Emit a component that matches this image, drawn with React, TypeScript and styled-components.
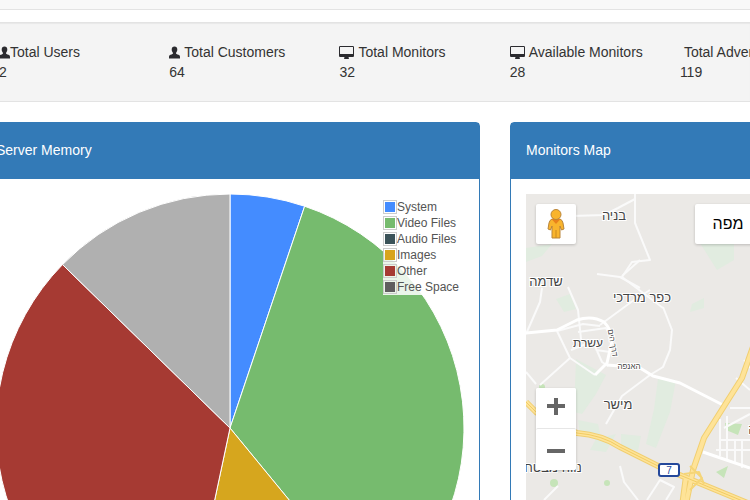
import React from "react";
import styled, { createGlobalStyle } from "styled-components";

const GlobalStyle = createGlobalStyle`
  * { box-sizing: border-box; }
  body {
    margin: 0;
    background: #fff;
    color: #333;
    font: 14px/20px "Liberation Sans", Arial, sans-serif;
  }
`;

const Page = styled.div`
  height: 100vh;
  overflow: hidden;
`;

const TopBar = styled.header`
  height: 10px;
  margin-bottom: 12px;
  background: #f8f8f8;
  border-bottom: 1px solid #e3e3e3;
`;

const StatsWell = styled.section`
  display: grid;
  grid-template-columns: repeat(6, calc(68% / 3));
  margin: 0 0 20px -1px;
  padding: 19px 0;
  background: #f4f4f4;
  border: solid #e3e3e3;
  border-width: 1px 0;
  box-shadow: inset 0 1px 1px rgba(0, 0, 0, 0.05);
`;

const Stat = styled.div`
  white-space: nowrap;
`;

const StatLabel = styled.div<{ $gap: number }>`
  display: flex;
  align-items: center;
  gap: ${(p) => p.$gap}px;
`;

const Icon = styled.svg<{ $width: number }>`
  width: ${(p) => p.$width}px;
  height: 13px;
  fill: #2b2b2f;
`;

const IconSpace = styled.span`
  width: 0;
`;

const Panels = styled.main`
  display: grid;
  grid-template-columns: repeat(2, calc(200% / 3));
  gap: 30px;
  margin: 0 20px 0 -20px;
`;

const Panel = styled.section`
  border: 1px solid #337ab7;
  border-radius: 4px;
`;

const PanelTitle = styled.h2`
  margin: 0;
  padding: 17px 15px 19px;
  background: #337ab7;
  color: #fff;
  font-size: 14px;
  font-weight: 400;
  line-height: 20px;
`;

const PanelBody = styled.div`
  position: relative;
  padding: 15px;
`;

const Drawing = styled.svg`
  display: block;
  width: 100%;
`;

const Legend = styled.ul`
  position: absolute;
  top: 20px;
  right: 20px;
  margin: 0;
  padding: 0;
  list-style: none;
  background: rgba(255, 255, 255, 0.85);
  color: #545454;
  font-size: 12px;
  line-height: 16px;
`;

const LegendItem = styled.li`
  display: flex;
  align-items: center;
`;

const Swatch = styled.span<{ $color: string }>`
  width: 14px;
  height: 14px;
  padding: 1px;
  border: 1px solid #ccc;
  background: ${(p) => p.$color} content-box;
`;

const MapFrame = styled.div`
  position: relative;
  overflow: hidden;
  background: #ebe9e6;
`;

const MapButton = styled.button`
  display: flex;
  align-items: center;
  justify-content: center;
  width: 40px;
  height: 40px;
  padding: 0;
  border: 0;
  border-radius: 2px;
  background: #fff;
  color: #000;
`;

const FloatingButton = styled(MapButton)`
  position: absolute;
  top: 10px;
  left: 10px;
  box-shadow: 0 1px 3px rgba(0, 0, 0, 0.2);
`;

const MapTypeButton = styled(FloatingButton)`
  left: 169px;
  width: 66px;
  font: 16px "Liberation Sans", Arial, sans-serif;
`;

const ZoomControl = styled.div`
  position: absolute;
  top: 194px;
  left: 10px;
  border-radius: 2px;
  background: #fff;
  box-shadow: 0 1px 3px rgba(0, 0, 0, 0.2);

  button + button {
    border-top: 1px solid #e6e6e6;
    height: 42px;
  }
`;

const MapLabel = styled.text<{ $size?: number }>`
  fill: #444;
  stroke: #fff;
  stroke-width: 2px;
  paint-order: stroke;
  text-anchor: middle;
  font: ${(p) => p.$size ?? 13}px "Liberation Sans", Arial, sans-serif;
`;

const ShieldText = styled.text`
  fill: #24489b;
  text-anchor: middle;
  font: 10px "Liberation Sans", Arial, sans-serif;
`;

type IconName = "user" | "desktop";

const icons: Record<IconName, { box: string; width: number; d: string }> = {
  user: {
    box: "0 0 11 13",
    width: 11,
    d: "M5.500 0.500C7.300 0.500 8.300 1.800 8.300 3.600 8.300 4.900 7.800 6 7.100 6.700V7.700C7.300 8.200 9.500 8.600 10.400 9.300 10.900 9.700 11 10.300 11 11.200V12.500H0V11.200C0 10.300 0.100 9.700 0.600 9.300 1.500 8.600 3.700 8.200 3.900 7.700V6.700C3.200 6 2.700 4.900 2.700 3.600 2.700 1.800 3.700 0.500 5.500 0.500Z",
  },
  desktop: {
    box: "0 0 1920 1664",
    width: 15,
    d: "M1792 992v-832q0-13-9.5-22.5t-22.5-9.5h-1600q-13 0-22.5 9.5t-9.5 22.5v832q0 13 9.5 22.5t22.5 9.5h1600q13 0 22.5-9.5t9.5-22.5zm128-832v1088q0 66-47 113t-113 47h-544q0 37 16 77.5t32 71 16 43.5q0 26-19 45t-45 19h-512q-26 0-45-19t-19-45q0-14 16-44t32-70 16-78h-544q-66 0-113-47t-47-113v-1088q0-66 47-113t113-47h1600q66 0 113 47t47 113z",
  },
};

const stats: { label: string; value: number; icon?: IconName; gap: number }[] = [
  { label: "Total Users", value: 2, icon: "user", gap: 0 },
  { label: "Total Customers", value: 64, icon: "user", gap: 4 },
  { label: "Total Monitors", value: 32, icon: "desktop", gap: 4 },
  { label: "Available Monitors", value: 28, icon: "desktop", gap: 4 },
  { label: "Total Advertisements", value: 119, gap: 4 },
];

const legend = [
  ["System", "#448cff"],
  ["Video Files", "#76bb6e"],
  ["Audio Files", "#3b5359"],
  ["Images", "#d8a41c"],
  ["Other", "#a63a33"],
  ["Free Space", "#5f5d5f"],
];

/* Start and end of each slice, in degrees clockwise from twelve o'clock. */
const slices: [number, number, string][] = [
  [0, 18.6, "#448cff"],
  [18.6, 140.6, "#76bb6e"],
  [140.6, 192, "#d6a61e"],
  [192, 314.3, "#a63a33"],
  [314.3, 360, "#b0b0b0"],
];

function slicePath(from: number, to: number) {
  const point = (deg: number) => {
    const a = (deg * Math.PI) / 180;
    return `${234 + 234 * Math.sin(a)} ${234 - 234 * Math.cos(a)}`;
  };
  return `M234 234L${point(from)}A234 234 0 ${to - from > 180 ? 1 : 0} 1 ${point(to)}Z`;
}

const parks = [
  "M174 49H208V66L191 76Z",
  "M0 54L26 50 16 62 0 68Z",
  "M30 105L44 100 50 115 38 118Z",
  "M50 165L80 181 70 200 56 220 48 218Z",
  "M132 185L150 186 144 218 130 254 120 250 128 215Z",
  "M52 226L72 230 76 248 54 240Z",
  "M70 245L90 240 80 258 64 256Z",
  "M95 240L115 242 112 257 95 252Z",
  "M166 110L178 104 178 114 164 118Z",
];

const lanes = [
  "M109 0V29L124 66 106 68 96 83 137 114",
  "M46 22L78 21 92 14 109 5",
  "M71 80L94 83 114 94M96 82L114 66",
  "M16 94L14 108 0 140",
  "M42 93L52 116 55 145",
  "M74 131L108 106 124 96",
  "M31 137L44 164 69 181M44 164L14 191",
  "M0 178L10 190",
  "M137 113L146 136 144 156 137 173 124 181 96 202 80 230",
  "M31 137L57 130 74 132M52 138L80 134 87 146M67 148L76 168 82 172M45 156L60 150M70 156L84 158",
  "M94 272L98 288 112 306M18 306L32 292M121 306L134 286 148 293 140 306",
  "M204 214L224 214M194 225V262M201 222V267M209 245V270M216 245V274M194 246H224M190 256H224M198 234L224 220",
  "M210 184L224 196M218 166L224 174",
];

const mainRoads =
  "M0 139L31 136 51 126Q66 121 78 128 86 136 86 147L81 169 69 181M81 171L94 172M114 174L127 182 154 189 197 211M177 258L224 274";
const highway = "M0 208L10 218Q30 233 51 239 76 241 94 253L134 273 161 284 224 310";
const trunkRoad = "M228 150L216 184 202 206 178 244 167 276 158 320M160 282L155 320";

const MapDrawing = () => (
  <Drawing viewBox="0 0 468 468" aria-label="Map">
    <rect width="468" height="468" fill="#ebe9e6" />
    {parks.map((d) => (
      <path key={d} d={d} fill="#e1ece0" />
    ))}
    <path d="M199 229L216 230 212 241 200 236ZM190 278L202 272 198 284Z" fill="#c6e4b9" />
    <g fill="#c6e4b9">
      <circle cx="28" cy="289" r="4" />
      <circle cx="81" cy="289" r="3" />
      <circle cx="16" cy="193" r="3" />
    </g>
    <g fill="none" stroke="#fafafa" strokeWidth="2" strokeLinejoin="round">
      {lanes.map((d) => (
        <path key={d} d={d} />
      ))}
      <path d={mainRoads} stroke="#fff" strokeWidth="3" />
    </g>
    <g fill="none" strokeLinejoin="round">
      <path d={highway + trunkRoad} stroke="#f1cf70" strokeWidth="6" />
      <path d={highway + trunkRoad} stroke="#fee398" strokeWidth="4" />
      <path d={highway} stroke="#f1cc62" />
      <path d="M158 280L173 278 178 290M164 272L176 284 164 296" stroke="#f5d577" strokeWidth="2" />
    </g>
    <MapLabel x="88" y="26">בניה</MapLabel>
    <MapLabel x="20" y="92">שדמה</MapLabel>
    <MapLabel x="116" y="108">כפר מרדכי</MapLabel>
    <MapLabel x="62" y="153" $size={12}>עשרת</MapLabel>
    <MapLabel x="103" y="175" $size={8}>האנפה</MapLabel>
    <MapLabel x="86" y="151" $size={8} transform="rotate(80 86 149)">דרך הים</MapLabel>
    <MapLabel x="92" y="215">מישר</MapLabel>
    <MapLabel x="27" y="278">נווה מבטח</MapLabel>
    <MapLabel x="236" y="240">גדרה</MapLabel>
    <rect x="133" y="270" width="20" height="12" rx="2" fill="#fff" stroke="#24489b" strokeWidth="2" />
    <ShieldText x="143" y="280">7</ShieldText>
  </Drawing>
);

const Pegman = () => (
  <svg width="18" height="32" viewBox="0 0 18 32" aria-hidden="true">
    <path
      d="M5 11H13Q15.500 12 16 15L17 21 14.500 22 13 18V30H5V18L3.500 22 1 21 2 15Q2.500 12 5 11Z"
      fill="#f9b42d"
      stroke="#b9853a"
    />
    <path d="M9 22V30" stroke="#c98a20" />
    <path d="M4.500 11L9 16 13.500 11Z" fill="#e8821c" />
    <circle cx="9" cy="6.500" r="5" fill="#f9b42d" stroke="#b9853a" />
  </svg>
);

export default function App() {
  return (
    <Page>
      <GlobalStyle />
      <TopBar />
      <StatsWell>
        {stats.map(({ label, value, icon, gap }) => (
          <Stat key={label}>
            <StatLabel $gap={gap}>
              {icon ? (
                <Icon $width={icons[icon].width} viewBox={icons[icon].box} aria-hidden="true">
                  <path d={icons[icon].d} />
                </Icon>
              ) : (
                <IconSpace />
              )}
              {label}
            </StatLabel>
            {value}
          </Stat>
        ))}
      </StatsWell>
      <Panels>
        <Panel>
          <PanelTitle>Server Memory</PanelTitle>
          <PanelBody>
            <Drawing viewBox="0 0 468 468" aria-label="Server memory by use">
              {slices.map(([from, to, color]) => (
                <path key={from} d={slicePath(from, to)} fill={color} stroke="#fff" strokeLinejoin="round" />
              ))}
            </Drawing>
            <Legend>
              {legend.map(([name, color]) => (
                <LegendItem key={name}>
                  <Swatch $color={color} />
                  {name}
                </LegendItem>
              ))}
            </Legend>
          </PanelBody>
        </Panel>
        <Panel>
          <PanelTitle>Monitors Map</PanelTitle>
          <PanelBody>
            <MapFrame>
              <MapDrawing />
              <FloatingButton aria-label="Street View">
                <Pegman />
              </FloatingButton>
              <MapTypeButton>מפה</MapTypeButton>
              <ZoomControl>
                <MapButton aria-label="Zoom in">
                  <svg width="18" height="20" viewBox="0 0 18 20" aria-hidden="true">
                    <path d="M0 8H18M9 -1V17" stroke="#666" strokeWidth="4" />
                  </svg>
                </MapButton>
                <MapButton aria-label="Zoom out">
                  <svg width="18" height="20" viewBox="0 0 18 20" aria-hidden="true">
                    <path d="M0 11H18" stroke="#666" strokeWidth="4" />
                  </svg>
                </MapButton>
              </ZoomControl>
            </MapFrame>
          </PanelBody>
        </Panel>
      </Panels>
    </Page>
  );
}
